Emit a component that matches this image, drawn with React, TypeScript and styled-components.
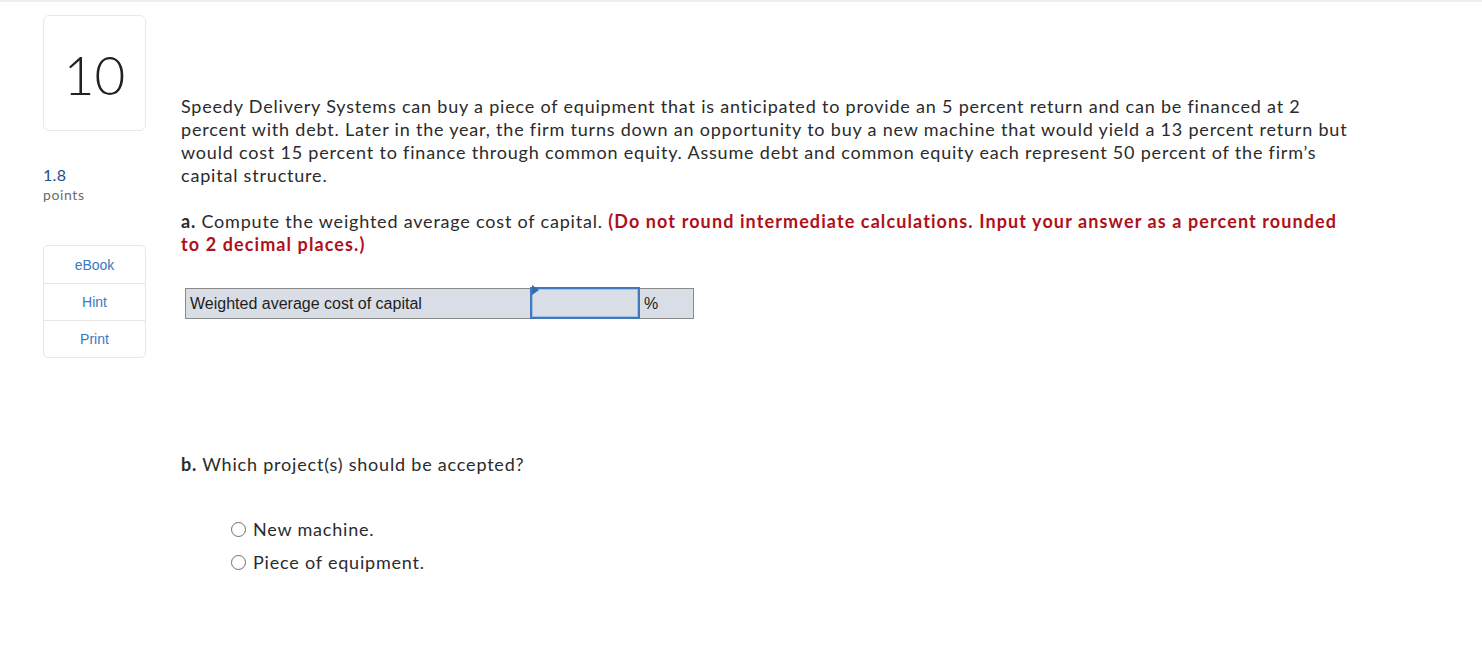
import styled, { createGlobalStyle } from "styled-components";

import type { ReactElement } from "react";

const GlobalStyle = createGlobalStyle`
	html, body {
		margin: 0;
		padding: 0;
		background: #ffffff;
	}
	body {
		font-family: Lato, "Liberation Sans", Arial, sans-serif;
		color: #2b2b2b;
	}
`;

const options = ["New machine.", "Piece of equipment."];
const tools = ["eBook", "Hint", "Print"];

export default function App(): ReactElement {
	return (
		<>
			<GlobalStyle />
			<Page>
				<Sidebar>
					<NumberBox>10</NumberBox>
					<Points>
						<PointsValue>1.8</PointsValue>
						<PointsLabel>points</PointsLabel>
					</Points>
					<ToolList>
						{tools.map((tool) => (
							<ToolButton key={tool}>{tool}</ToolButton>
						))}
					</ToolList>
				</Sidebar>

				<Main>
					<Paragraph>
						Speedy Delivery Systems can buy a piece of equipment that is anticipated to provide an 5 percent
						return and can be financed at 2 percent with debt. Later in the year, the firm turns down an
						opportunity to buy a new machine that would yield a 13 percent return but would cost 15 percent to
						finance through common equity. Assume debt and common equity each represent 50 percent of the
						firm’s capital structure.
					</Paragraph>

					<Question>
						<Letter>a.</Letter> Compute the weighted average cost of capital.{" "}
						<Warning>
							(Do not round intermediate calculations. Input your answer as a percent rounded to 2 decimal
							places.)
						</Warning>
					</Question>

					<AnswerTable>
						<tbody>
							<tr>
								<LabelCell>Weighted average cost of capital</LabelCell>
								<InputCell>
									<Flag />
								</InputCell>
								<UnitCell>%</UnitCell>
							</tr>
						</tbody>
					</AnswerTable>

					<QuestionB>
						<Letter>b.</Letter> Which project(s) should be accepted?
					</QuestionB>

					<OptionList>
						{options.map((option) => (
							<OptionRow key={option}>
								<Radio />
								<span>{option}</span>
							</OptionRow>
						))}
					</OptionList>
				</Main>
			</Page>
		</>
	);
}

const Page = styled.div`
	display: flex;
	align-items: flex-start;
	gap: 35px;
	min-height: 662px;
	box-sizing: border-box;
	border-top: 2px solid #eeeeee;
	padding: 13px 0 0 43px;
`;

const Sidebar = styled.aside`
	display: flex;
	flex-direction: column;
	width: 103px;
	flex-shrink: 0;
`;

const NumberBox = styled.div`
	display: flex;
	align-items: center;
	justify-content: center;
	height: 116px;
	box-sizing: border-box;
	border: 1px solid #e8e8e8;
	border-radius: 6px;
	font-size: 53px;
	font-weight: 300;
	color: #222222;
	padding-top: 2px;
`;

const Points = styled.div`
	display: flex;
	flex-direction: column;
	margin-top: 34px;
`;

const PointsValue = styled.span`
	font-size: 16px;
	line-height: 20px;
	letter-spacing: 0.3px;
	color: #1f4e8c;
`;

const PointsLabel = styled.span`
	font-size: 14px;
	line-height: 20px;
	letter-spacing: 0.6px;
	color: #6b6b6b;
`;

const ToolList = styled.div`
	display: flex;
	flex-direction: column;
	margin-top: 40px;
	border: 1px solid #e6e6e6;
	border-radius: 5px;
`;

const ToolButton = styled.div`
	display: flex;
	align-items: center;
	justify-content: center;
	height: 37px;
	box-sizing: border-box;
	font-family: "Liberation Sans", Arial, sans-serif;
	font-size: 14px;
	color: #3a78c3;

	& + & {
		border-top: 1px solid #e6e6e6;
	}
`;

const Main = styled.main`
	display: flex;
	flex-direction: column;
	align-items: flex-start;
	width: 1178px;
	padding-top: 80px;
	font-size: 18px;
	line-height: 23px;
	letter-spacing: 0.8px;
`;

const Paragraph = styled.p`
	margin: 0;
`;

const Question = styled.p`
	margin: 23px 0 0;
`;

const Letter = styled.span`
	font-weight: 700;
`;

const Warning = styled.span`
	font-weight: 700;
	letter-spacing: 1.1px;
	color: #b0101a;
`;

const AnswerTable = styled.table`
	margin: 31px 0 0 4px;
	border-collapse: collapse;
	font-family: "Liberation Sans", Arial, sans-serif;
	font-size: 16px;
	letter-spacing: 0;
	color: #1e1e1e;
`;

const Cell = styled.td`
	height: 28px;
	padding: 0 4px;
	background: #d9dde6;
	border: 1px solid #8a8a8a;
`;

const LabelCell = styled(Cell)`
	width: 336px;
`;

const InputCell = styled(Cell)`
	position: relative;
	width: 106px;
	padding: 0;
	border: 2px solid #3f78bd;
	box-shadow: inset 0 0 0 1px #a9c0dd;
`;

const Flag = styled.span`
	position: absolute;
	top: 0;
	left: 0;
	width: 0;
	height: 0;
	border-top: 5px solid transparent;
	border-bottom: 5px solid transparent;
	border-left: 7px solid #2f6cb5;
	transform: translateY(-4px);
`;

const UnitCell = styled(Cell)`
	width: 45px;
`;

const QuestionB = styled.p`
	margin: 134px 0 0;
`;

const OptionList = styled.div`
	display: flex;
	flex-direction: column;
	gap: 10px;
	margin-top: 42px;
	padding-left: 50px;
`;

const OptionRow = styled.label`
	display: flex;
	align-items: center;
	gap: 7px;
`;

const Radio = styled.span`
	width: 15px;
	height: 15px;
	box-sizing: border-box;
	border: 1px solid #6e6e6e;
	border-radius: 50%;
	background: #ffffff;
`;
